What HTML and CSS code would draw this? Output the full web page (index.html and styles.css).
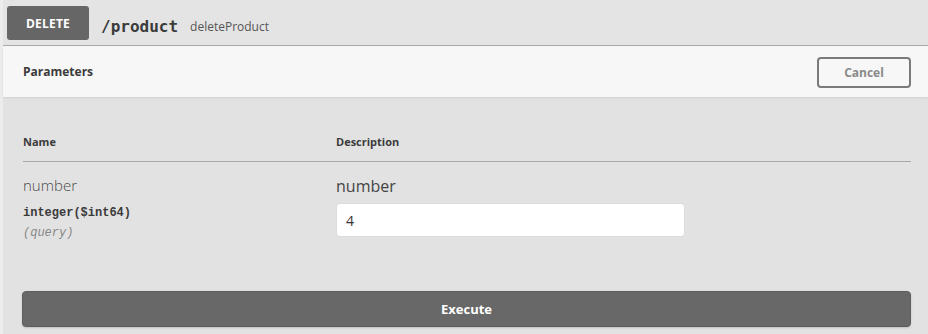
FILE: index.html
```html
<!DOCTYPE html>
<html>
<head>
<meta charset="utf-8">
<link rel="stylesheet" href="styles.css">
</head>
<body>
<div class="opblock">
  <div class="summary">
    <span class="method">DELETE</span>
    <span class="path">/product</span>
    <span class="opid">deleteProduct</span>
  </div>
  <div class="section-header">
    <h4 class="section-title">Parameters</h4>
    <button class="btn-cancel">Cancel</button>
  </div>
  <div class="params">
    <div class="table-head">
      <div class="col-name">Name</div>
      <div class="col-desc">Description</div>
    </div>
    <div class="param-row">
      <div class="col-name">
        <div class="param-name">number</div>
        <div class="param-type">integer($int64)</div>
        <div class="param-in">(query)</div>
      </div>
      <div class="col-desc">
        <div class="param-desc">number</div>
        <input class="param-input" type="text" value="4">
      </div>
    </div>
  </div>
  <div class="execute-wrap">
    <button class="btn-execute">Execute</button>
  </div>
</div>
</body>
</html>
```

FILE: styles.css
```css
* { box-sizing: border-box; }
html, body { margin: 0; padding: 0; }
body {
  background: #e2e2e2;
  font-family: "Open Sans", "Noto Sans", sans-serif;
  color: #3b4151;
  width: 928px;
  height: 334px;
  overflow: hidden;
}
.opblock {
  background: #e2e2e2;
  border-left: 3px solid #ececec;
  height: 334px;
}
.summary {
  display: flex;
  align-items: center;
  height: 46px;
  padding-left: 4px;
  background: #e4e4e4;
  border-bottom: 1px solid #aaaaaa;
}
.method {
  display: flex;
  align-items: center;
  justify-content: center;
  width: 82px;
  height: 34px;
  margin-top: 1px;
  background: #666666;
  border-radius: 3px;
  color: #ffffff;
  font-weight: 700;
  font-size: 12px;
  letter-spacing: 0.2px;
}
.path {
  margin-left: 12px;
  margin-top: 8px;
  font-family: "DejaVu Sans Mono", "Liberation Mono", monospace;
  font-weight: 700;
  font-size: 16px;
  color: #3b3b3b;
}
.opid {
  margin-left: 12px;
  margin-top: 8px;
  font-size: 12px;
  color: #555555;
}
.section-header {
  display: flex;
  align-items: center;
  justify-content: space-between;
  height: 51px;
  padding: 0 17px 0 20px;
  background: #f7f7f7;
  box-shadow: 0 1px 2px rgba(0,0,0,0.08);
  position: relative;
}
.section-title {
  margin: 0;
  font-size: 12px;
  font-weight: 700;
  color: #3b3b3b;
}
.btn-cancel {
  width: 94px;
  height: 31px;
  margin-top: 1px;
  background: transparent;
  border: 2px solid #7a7a7a;
  border-radius: 4px;
  font-family: "Open Sans", sans-serif;
  font-weight: 700;
  font-size: 12px;
  color: #8a8a8a;
}
.params {
  padding: 37px 17px 0 20px;
}
.table-head {
  display: flex;
  height: 28px;
  border-bottom: 1px solid #a8a8a8;
  font-size: 11px;
  font-weight: 700;
  color: #3b3b3b;
  line-height: 16px;
}
.col-name { width: 313px; flex: none; }
.col-desc { flex: 1; }
.param-row {
  display: flex;
  padding-top: 13px;
}
.param-name {
  font-size: 15px;
  line-height: 20px;
  color: #4a4a4a;
  font-weight: 300;
}
.param-type {
  margin-top: 10px;
  font-family: "Liberation Mono", "DejaVu Sans Mono", monospace;
  font-size: 12px;
  font-weight: 700;
  line-height: 16px;
  color: #3b3b3b;
}
.param-in {
  margin-top: 4px;
  font-family: "Liberation Mono", "DejaVu Sans Mono", monospace;
  font-size: 12px;
  font-style: italic;
  line-height: 16px;
  color: #888888;
}
.param-desc {
  font-size: 16px;
  line-height: 22px;
  color: #444444;
}
.param-input {
  display: block;
  margin-top: 6px;
  width: 349px;
  height: 34px;
  padding: 0 9px;
  background: #ffffff;
  border: 1px solid #dcdcdc;
  border-radius: 4px;
  font-family: "Open Sans", sans-serif;
  font-size: 14px;
  color: #333333;
}
.execute-wrap {
  padding: 50px 17px 0 19px;
}
.btn-execute {
  display: block;
  width: 100%;
  height: 36px;
  background: #686868;
  border: 1px solid #5e5e5e;
  border-radius: 4px;
  color: #ffffff;
  font-family: "Open Sans", sans-serif;
  font-weight: 700;
  font-size: 13px;
  box-shadow: 0 1px 2px rgba(0,0,0,0.15);
}
```
